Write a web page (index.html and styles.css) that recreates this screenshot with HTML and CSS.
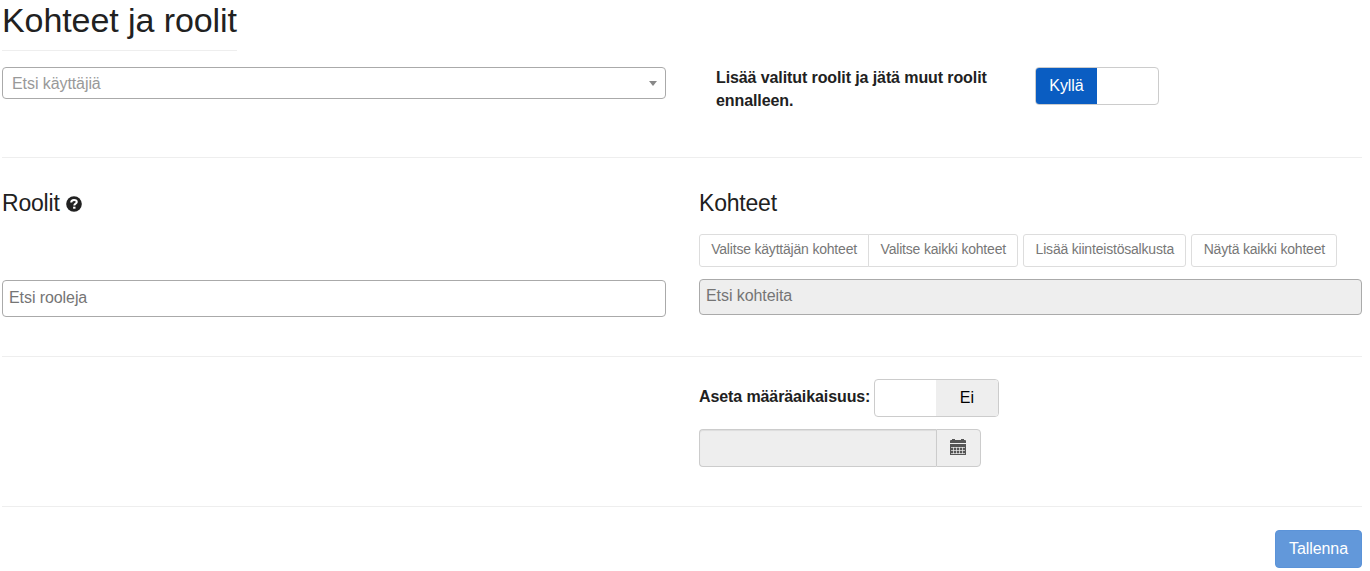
FILE: index.html
```html
<!DOCTYPE html>
<html lang="fi">
<head>
  <meta charset="UTF-8" />
  <meta name="viewport" content="width=device-width, initial-scale=1" />
  <title>Kohteet ja roolit</title>
  <link rel="stylesheet" href="styles.css">
</head>
<body>
  <main>
    <h1 class="page-header">Kohteet ja roolit</h1>

    <!-- Käyttäjät -->
    <section class="row row-users">
      <div class="col">
        <div class="select" tabindex="0" role="combobox" aria-label="Etsi käyttäjiä">
          <span>Etsi käyttäjiä</span>
          <span class="caret"></span>
        </div>
      </div>
      <div class="col keep-roles">
        <label class="keep-label">Lisää valitut roolit ja jätä muut roolit ennalleen.</label>
        <div class="switch switch-keep" role="switch" aria-checked="true">
          <span class="switch-on">Kyllä</span>
          <span class="switch-blank"></span>
        </div>
      </div>
    </section>

    <!-- Roolit ja kohteet -->
    <section class="row row-roles">
      <div class="col">
        <h3>Roolit
          <svg class="help-icon" viewBox="0 0 16 16" aria-hidden="true">
            <circle cx="8" cy="8" r="7.8" />
            <path class="mark" d="M5.2 6.4C5.2 4.6 6.3 3.9 8 3.9s2.8.8 2.8 2.2c0 1.6-2.5 1.6-2.5 3.3" />
            <path class="dot" d="M7.1 10.7h2.4v2H7.1z" />
          </svg>
        </h3>
        <input class="search search-roles" type="text" placeholder="Etsi rooleja">
      </div>
      <div class="col">
        <h3>Kohteet</h3>
        <div class="toolbar">
          <div class="btn-group">
            <button class="btn-sm">Valitse käyttäjän kohteet</button>
            <button class="btn-sm">Valitse kaikki kohteet</button>
          </div>
          <button class="btn-sm">Lisää kiinteistösalkusta</button>
          <button class="btn-sm">Näytä kaikki kohteet</button>
        </div>
        <input class="search search-targets" type="text" placeholder="Etsi kohteita" disabled>
      </div>
    </section>

    <!-- Määräaikaisuus -->
    <section class="row row-period">
      <div class="col"></div>
      <div class="col">
        <div class="period">
          <label>Aseta määräaikaisuus:</label>
          <div class="switch switch-period" role="switch" aria-checked="false">
            <span class="switch-blank"></span>
            <span class="switch-off">Ei</span>
          </div>
        </div>
        <div class="date-group">
          <input class="date-input" type="text" aria-label="Päivämäärä" disabled>
          <span class="date-addon">
            <svg class="calendar-icon" viewBox="0 0 16 16" aria-hidden="true">
              <path d="M0 4V2q0-1 1-1h1V0h3v1h6V0h3v1h1q1 0 1 1v2z" />
              <path d="M0 5h16v11H0z" />
              <path class="grid" d="M1 8.5h14M1 11.5h14M1 14.5h14" />
              <path class="grid" d="M3.5 8v7M6.5 8v7M9.5 8v7M12.5 8v7" />
            </svg>
          </span>
        </div>
      </div>
    </section>

    <div class="actions">
      <button class="btn-primary" disabled>Tallenna</button>
    </div>
  </main>
</body>
</html>
```
FILE: styles.css
```css
*, *::before, *::after {
  box-sizing: border-box;
}

body {
  margin: 0;
  font-family: "Liberation Sans", Arial, sans-serif;
  font-size: 16px;
  line-height: 23px;
  letter-spacing: -0.08px;
  color: #212121;
  background: #fff;
}

main {
  padding: 0 8px 0 2px;
}

button,
input {
  font-family: inherit;
  letter-spacing: inherit;
}

label {
  font-weight: 700;
  letter-spacing: -0.1px;
}

h3 {
  margin: 0;
  font-size: 23px;
  font-weight: 400;
  line-height: 25px;
  letter-spacing: -0.2px;
}

.page-header {
  width: fit-content;
  height: 51px;
  margin: 0 0 16px;
  border-bottom: 1px solid #eee;
  font-size: 34px;
  font-weight: 400;
  line-height: 40px;
}

/* Rivit */
.row {
  display: grid;
  grid-template-columns: 664px 663px;
  column-gap: 33px;
  border-bottom: 1px solid #eee;
}

.row-users {
  height: 91px;
}

.row-roles {
  height: 199px;
  padding-top: 33px;
}

.row-period {
  height: 150px;
  padding-top: 22px;
}

/* Käyttäjähaku */
.select {
  display: flex;
  align-items: center;
  justify-content: space-between;
  height: 32px;
  padding: 0 8px 0 9px;
  border: 1px solid #aaa;
  border-radius: 4px;
  color: #999;
}

.caret {
  border: 4px solid transparent;
  border-top: 5px solid #888;
  border-bottom: 0;
}

.keep-roles {
  display: flex;
  align-items: flex-start;
  padding-left: 17px;
}

.keep-label {
  width: 319px;
  padding-right: 30px;
  line-height: 23px;
  margin-top: -1px;
}

/* Kytkimet */
.switch {
  display: flex;
  height: 38px;
  border: 1px solid #ccc;
  border-radius: 4px;
  overflow: hidden;
  line-height: 36px;
  text-align: center;
}

.switch-keep {
  width: 124px;
}

.switch-period {
  width: 125px;
}

.switch span {
  flex: 1;
}

.switch-on {
  background: #0a5dc2;
  color: #fff;
}

.switch .switch-off {
  flex: 0 0 62px;
  padding-right: 1px;
  background: #eee;
  color: #000;
}

/* Haut */
.help-icon {
  width: 16px;
  height: 16px;
  vertical-align: -1px;
  fill: #212121;
}

.help-icon .mark {
  fill: none;
  stroke: #fff;
  stroke-width: 2;
}

.help-icon .dot {
  fill: #fff;
}

.search {
  display: block;
  width: 100%;
  padding: 0 6px;
  border: 1px solid #aaa;
  border-radius: 4px;
  font-size: 16px;
}

.search::placeholder {
  color: #757575;
}

.search-roles {
  height: 37px;
  margin-top: 64px;
  padding-bottom: 2px;
}

.search-targets {
  height: 36px;
  padding-bottom: 3px;
  background: #eee;
}

.toolbar {
  display: flex;
  gap: 5px;
  margin: 18px 0 12px;
}

.btn-group {
  display: flex;
}

.btn-sm {
  height: 33px;
  padding: 0 11.5px 3px 11.2px;
  border: 1px solid #ddd;
  border-radius: 3px;
  background: #fff;
  color: #777;
  font-size: 14px;
  letter-spacing: -0.2px;
  white-space: nowrap;
}

.btn-group .btn-sm:first-child {
  border-radius: 3px 0 0 3px;
}

.btn-group .btn-sm:last-child {
  margin-left: -1px;
  border-radius: 0 3px 3px 0;
}

/* Määräaikaisuus */
.period {
  display: flex;
  gap: 4px;
  margin-bottom: 12px;
}

.period label {
  margin-top: 6px;
}

.date-group {
  display: flex;
  width: 282px;
  height: 38px;
}

.date-input {
  width: 237px;
  border: 1px solid #ccc;
  border-right: 0;
  border-radius: 4px 0 0 4px;
  background: #eee;
  box-shadow: inset 0 1px 1px rgba(0, 0, 0, 0.075);
}

.date-addon {
  display: flex;
  flex: 1;
  align-items: center;
  justify-content: center;
  padding: 0 1px 2px 0;
  border: 1px solid #ccc;
  border-radius: 0 4px 4px 0;
  background: #eee;
}

.calendar-icon {
  width: 16px;
  height: 16px;
  fill: #555;
}

.calendar-icon .grid {
  stroke: #eee;
  stroke-width: 0.7;
}

/* Tallennus */
.actions {
  display: flex;
  justify-content: flex-end;
  padding-top: 23px;
}

.btn-primary {
  width: 87px;
  height: 38px;
  padding: 0;
  border: 1px solid #5b93d8;
  border-radius: 4px;
  background: #6298da;
  color: #fff;
  font-size: 16px;
}
```
